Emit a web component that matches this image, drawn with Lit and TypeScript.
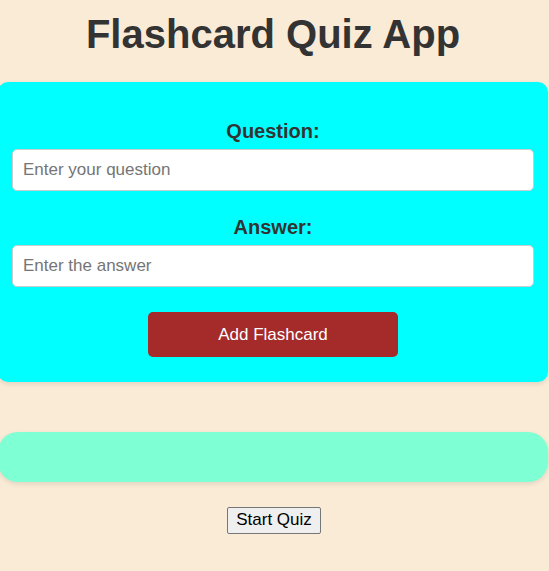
import { LitElement, html, css } from "lit";
import { customElement } from "lit/decorators.js";

@customElement("app-root")
export class AppRoot extends LitElement {
  static styles = css`
    :host {
      display: block;
      min-height: 100vh;
      box-sizing: border-box;
      padding: 11px 1px 37px 0;
      overflow: hidden;
      background: antiquewhite;
      color: #333;
      font-family: Arial, "Liberation Sans", sans-serif;
      text-align: center;
    }
    *, *::before, *::after { box-sizing: border-box; }
    .title {
      margin: 0 0 25px -2px;
      font-size: 40px;
      line-height: 46px;
      font-weight: bold;
    }
    .form {
      margin: 0 0 50px -2px;
      padding: 38px 14px 25px;
      border-radius: 10px;
      background: aqua;
      box-shadow: 0 2px 5px rgba(0, 0, 0, 0.1);
    }
    .field { margin-bottom: 25px; }
    .label {
      display: block;
      margin-bottom: 6px;
      font-size: 20px;
      line-height: 23px;
      font-weight: bold;
    }
    .input {
      display: block;
      width: 100%;
      height: 42px;
      padding: 0 10px;
      border: 1px solid #ccc;
      border-radius: 5px;
      background: #fff;
      font-family: inherit;
      font-size: 17px;
    }
    .input::placeholder { color: #757575; }
    .add {
      width: 250px;
      max-width: 100%;
      height: 45px;
      display: block;
      margin: 0 auto;
      border: 0;
      border-radius: 5px;
      background: brown;
      color: #fff;
      font-family: inherit;
      font-size: 17px;
      cursor: pointer;
    }
    .cards {
      min-height: 50px;
      margin: 0 0 25px -2px;
      border-radius: 20px;
      background: aquamarine;
      box-shadow: 0 2px 5px rgba(0, 0, 0, 0.1);
    }
    .start {
      display: block;
      height: 27px;
      margin: 0 auto;
      padding: 0 8px 2px;
      border: 1px solid #767676;
      border-radius: 2px;
      background: #efefef;
      color: #000;
      font-family: inherit;
      font-size: 17px;
    }
  `;

  render() {
    return html`
      <h1 class="title">Flashcard Quiz App</h1>
      <form class="form" @submit=${(e: Event) => e.preventDefault()}>
        <div class="field">
          <label class="label" for="question">Question:</label>
          <input class="input" id="question" type="text" placeholder="Enter your question" />
        </div>
        <div class="field">
          <label class="label" for="answer">Answer:</label>
          <input class="input" id="answer" type="text" placeholder="Enter the answer" />
        </div>
        <button class="add" type="submit">Add Flashcard</button>
      </form>
      <section class="cards"></section>
      <button class="start" type="button">Start Quiz</button>
    `;
  }
}
